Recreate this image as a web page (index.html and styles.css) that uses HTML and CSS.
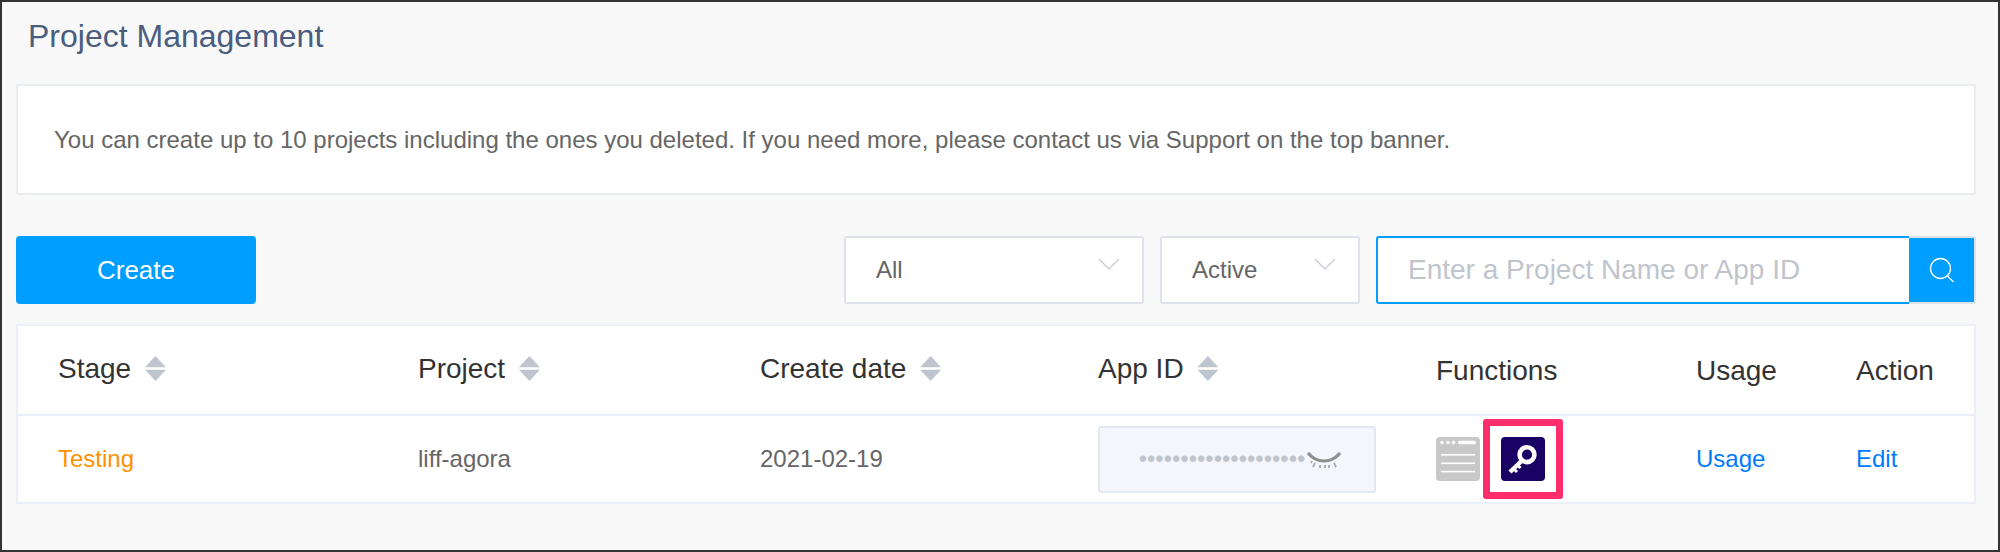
FILE: index.html
```html
<!doctype html>
<html lang="en">
  <head>
    <meta charset="UTF-8" />
    <meta name="viewport" content="width=device-width, initial-scale=1.0" />
    <title>Project Management</title>
    <link rel="stylesheet" href="styles.css">
  </head>
  <body>
    <div class="page">
      <h1 class="page-title">Project Management</h1>
      <div class="notice">
        You can create up to 10 projects including the ones you deleted. If you need more, please contact us via Support on the top banner.
      </div>

      <div class="toolbar">
        <button class="create-button">Create</button>
        <div class="filters">
          <div class="select select-stage">
            <span>All</span>
            <svg class="chevron" width="22" height="12" viewBox="0 0 22 12"><path d="M1 1l10 10L21 1" /></svg>
          </div>
          <div class="select select-status">
            <span>Active</span>
            <svg class="chevron" width="22" height="12" viewBox="0 0 22 12"><path d="M1 1l10 10L21 1" /></svg>
          </div>
          <div class="search">
            <input class="search-input" type="text" placeholder="Enter a Project Name or App ID" />
            <button class="search-button">
              <svg width="26" height="26" viewBox="0 0 26 26"><circle cx="11.5" cy="11.5" r="10" /><path d="M18.5 19l6 6" /></svg>
            </button>
          </div>
        </div>
      </div>

      <table class="projects">
        <colgroup>
          <col class="col-stage" />
          <col class="col-project" />
          <col class="col-date" />
          <col class="col-appid" />
          <col class="col-functions" />
          <col class="col-usage" />
          <col class="col-action" />
        </colgroup>
        <thead>
          <tr>
            <th class="sortable">Stage <span class="sort"></span></th>
            <th class="sortable">Project <span class="sort"></span></th>
            <th class="sortable">Create date <span class="sort"></span></th>
            <th class="sortable">App ID <span class="sort"></span></th>
            <th>Functions</th>
            <th>Usage</th>
            <th>Action</th>
          </tr>
        </thead>
        <tbody>
          <tr>
            <td class="stage-testing">Testing</td>
            <td>liff-agora</td>
            <td>2021-02-19</td>
            <td>
              <div class="app-id">
                <span class="app-id-dots">••••••••••••••••••••</span>
                <svg class="eye" width="34" height="16" viewBox="0 0 34 16">
                  <path class="eye-lid" d="M1 1c4 5 9 8 16 8s12-3 16-8" />
                  <path class="eye-lash" d="M5 9l-1 2M8 11l-2 4M13 13v3M18 13v3M22 13v3M27 11l2 4" />
                </svg>
              </div>
            </td>
            <td>
              <div class="functions">
                <svg class="fn-icon" width="44" height="44" viewBox="0 0 44 44">
                  <rect width="44" height="44" rx="4" fill="#c8c8c8" />
                  <circle cx="6" cy="5.5" r="1.8" fill="#fff" />
                  <circle cx="12" cy="5.5" r="1.8" fill="#fff" />
                  <circle cx="17.5" cy="5.5" r="1.8" fill="#fff" />
                  <rect x="22" y="3.7" width="18" height="3.6" rx="1.8" fill="#fff" />
                  <rect x="5" y="17" width="34" height="1.6" fill="#fff" />
                  <rect x="5" y="25.5" width="34" height="1.6" fill="#fff" />
                  <rect x="5" y="33.8" width="34" height="1.6" fill="#fff" />
                </svg>
                <div class="fn-highlight">
                  <svg class="fn-icon" width="44" height="44" viewBox="0 0 44 44">
                    <rect width="44" height="44" rx="4" fill="#1a0264" />
                    <circle cx="26" cy="17.7" r="7.4" fill="none" stroke="#fff" stroke-width="4.6" />
                    <path d="M20 24.5l-11 10.5" fill="none" stroke="#fff" stroke-width="4.4" />
                    <path d="M12.5 31.5l3.5 3.5M16.5 28l3 3" fill="none" stroke="#fff" stroke-width="3" />
                  </svg>
                </div>
              </div>
            </td>
            <td><a class="link" href="#">Usage</a></td>
            <td><a class="link" href="#">Edit</a></td>
          </tr>
        </tbody>
      </table>
    </div>
  </body>
</html>
```

FILE: styles.css
```css
* {
  box-sizing: border-box;
}
body {
  font-family: "Liberation Sans", Arial, sans-serif;
  margin: 0;
  padding: 0;
  background-color: #f8f8f8;
}
.page {
  height: 552px;
  padding: 0 22px 0 14px;
  border: 2px solid #333;
}
.page-title {
  height: 82px;
  margin: 0;
  padding: 19px 0 0 12px;
  font-size: 32px;
  line-height: 30px;
  font-weight: normal;
  color: #4a5d7e;
}
.notice {
  display: flex;
  align-items: center;
  height: 111px;
  padding: 0 36px;
  background-color: #fff;
  border: 2px solid #e8ebf0;
  border-radius: 3px;
  font-size: 24px;
  color: #666;
}
.toolbar {
  display: flex;
  justify-content: space-between;
  height: 68px;
  margin-top: 41px;
}
.create-button {
  width: 240px;
  background-color: #009eff;
  border: none;
  border-radius: 4px;
  font-family: inherit;
  font-size: 26px;
  color: #fff;
}
.filters {
  display: flex;
  gap: 16px;
}
.select {
  display: flex;
  justify-content: space-between;
  align-items: center;
  padding: 0 22px 0 30px;
  background-color: #fff;
  border: 2px solid #dde1ea;
  border-radius: 3px;
  font-size: 24px;
  color: #666;
}
.select-stage {
  width: 300px;
}
.select-status {
  width: 200px;
}
.chevron {
  margin-bottom: 13px;
  fill: none;
  stroke: #c8ccd6;
  stroke-width: 1.4;
}
.search {
  display: flex;
  width: 600px;
}
.search-input {
  flex: 1;
  min-width: 0;
  padding: 0 30px;
  background-color: #fff;
  border: 2px solid #009eff;
  border-right: none;
  border-radius: 3px 0 0 3px;
  outline: none;
  font-family: inherit;
  font-size: 28px;
  color: #666;
}
.search-input::placeholder {
  color: #c0c4cc;
  opacity: 1;
}
.search-button {
  display: flex;
  align-items: center;
  justify-content: center;
  width: 67px;
  padding: 0;
  background-color: #009eff;
  border: 2px solid #dde1ea;
  border-left: none;
  border-radius: 0 3px 3px 0;
}
.search-button svg {
  fill: none;
  stroke: #fff;
  stroke-width: 1.3;
}
.projects {
  width: 1960px;
  height: 180px;
  margin-top: 20px;
  table-layout: fixed;
  border-collapse: collapse;
  background-color: #fff;
  border: 2px solid #ebeff8;
}
.col-stage { width: 401px; }
.col-project { width: 342px; }
.col-date { width: 338px; }
.col-appid { width: 338px; }
.col-functions { width: 260px; }
.col-usage { width: 160px; }
.projects th,
.projects td {
  padding: 0 0 0 40px;
  text-align: left;
  vertical-align: middle;
}
.projects th + th,
.projects td + td {
  padding-left: 0;
}
.projects th {
  height: 90px;
  padding-top: 2px;
  border-bottom: 2px solid #ebeff8;
  font-size: 28px;
  font-weight: normal;
  color: #333;
}
.projects th.sortable {
  padding-top: 0;
  padding-bottom: 2px;
}
.projects td {
  font-size: 24px;
  color: #666;
}
.sort {
  display: inline-block;
  width: 21px;
  height: 25px;
  margin-left: 6px;
  vertical-align: -3px;
  background-color: #bfc5ce;
  clip-path: polygon(50% 0, 100% 45%, 0 45%, 0 55%, 100% 55%, 50% 100%, 0 55%, 0 45%);
}
.projects .stage-testing {
  color: #ff9000;
}
.link {
  color: #007bff;
  text-decoration: none;
}
.app-id {
  display: flex;
  align-items: center;
  justify-content: center;
  width: 278px;
  height: 67px;
  padding-left: 6px;
  background-color: #f5f6fb;
  border: 2px solid #e3e7ef;
  border-radius: 3px;
}
.app-id-dots {
  font-size: 23.8px;
  color: #c0c4cc;
}
.eye {
  margin: 2px 0 0 2px;
  fill: none;
}
.eye-lid {
  stroke: #8f8f8f;
  stroke-width: 3.2;
}
.eye-lash {
  stroke: #aaa;
  stroke-width: 1.8;
}
.functions {
  display: flex;
  align-items: center;
  gap: 3px;
}
.fn-icon {
  display: block;
}
.fn-highlight {
  display: flex;
  align-items: center;
  justify-content: center;
  width: 80px;
  height: 80px;
  background-color: #fff;
  border: 7px solid #ff2d6b;
  border-radius: 3px;
}
```
